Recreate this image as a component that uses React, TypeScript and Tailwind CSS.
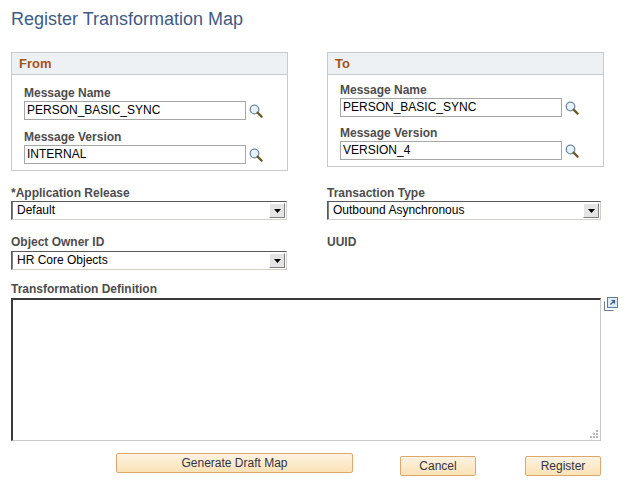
import React from 'react';

const Lookup: React.FC = () => (
  <svg width="14" height="14" viewBox="0 0 14 14" className="ml-[3px] shrink-0">
    <circle cx="5.5" cy="5.5" r="4.3" fill="#e4f1fb" stroke="#6f8aa5" strokeWidth="1.3" />
    <path d="M3.6 4.2 A2.4 2.4 0 0 1 5.8 2.9" fill="none" stroke="#ffffff" strokeWidth="1" />
    <path d="M8.6 8.6 L12.6 12.6" stroke="#6b5a2a" strokeWidth="2.2" strokeLinecap="round" />
  </svg>
);

const LookupField: React.FC<{ label: string; value: string; className?: string }> = ({ label, value, className }) => (
  <div className={className}>
    <div className="text-[12px] font-bold leading-[14px] text-[#4d4d4d]">{label}</div>
    <div className="flex items-center mt-[1px]">
      <div className="w-[222px] h-[19px] border border-[#a6a6a6] bg-white px-[2px] text-[12px] leading-[17px] text-black">
        {value}
      </div>
      <Lookup />
    </div>
  </div>
);

const Group: React.FC<{ title: string; children: React.ReactNode; tight?: boolean }> = ({ title, children, tight }) => (
  <div className={`w-[277px] border border-[#c8cbce] ${tight ? 'h-[115px]' : 'h-[119px]'}`}>
    <div className="h-[22px] bg-[#eef1f3] border-b border-[#c8cbce] px-[7px] text-[13px] font-bold leading-[21px] text-[#a4541b]">
      {title}
    </div>
    <div className="pl-[12px]">{children}</div>
  </div>
);

const Select: React.FC<{ value: string; width: string }> = ({ value, width }) => (
  <div className={`${width} h-[19px] flex border-t border-l border-t-[#5a5a5a] border-l-[#5a5a5a] border-b border-r border-b-[#d4d0c8] border-r-[#d4d0c8] bg-white`}>
    <div className="flex-1 pl-[4px] text-[12px] leading-[17px] text-black border-l border-[#808080]">{value}</div>
    <div className="w-[16px] h-[15px] mt-[1px] mr-[1px] bg-[#e4e4e4] border border-t-white border-l-white border-b-[#808080] border-r-[#808080] flex items-center justify-center">
      <svg width="7" height="4" viewBox="0 0 7 4">
        <path d="M0 0 H7 L3.5 4 Z" fill="#000" />
      </svg>
    </div>
  </div>
);

const Label: React.FC<{ children: React.ReactNode }> = ({ children }) => (
  <div className="text-[12px] font-bold leading-[14px] text-[#4d4d4d]">{children}</div>
);

const Button: React.FC<{ label: string; width: string }> = ({ label, width }) => (
  <button
    type="button"
    className={`${width} h-[20px] rounded-[2px] border border-[#e0a76d] bg-gradient-to-b from-[#fdf3e2] to-[#fbe2b6] text-[12px] leading-[18px] text-[#333344]`}
  >
    {label}
  </button>
);

export default function App() {
  return (
    <div className="w-[630px] h-[489px] bg-white font-['Liberation_Sans',Arial,sans-serif] px-[11px] pt-[9px]">
      <h1 className="text-[18px] leading-[21px] text-[#3e5b86]">Register Transformation Map</h1>

      <div className="flex mt-[22px]">
        <Group title="From">
          <LookupField label="Message Name" value="PERSON_BASIC_SYNC" className="pt-[11px]" />
          <LookupField label="Message Version" value="INTERNAL" className="pt-[10px]" />
        </Group>
        <div className="ml-[39px]">
          <Group title="To" tight>
            <LookupField label="Message Name" value="PERSON_BASIC_SYNC" className="pt-[8px]" />
            <LookupField label="Message Version" value="VERSION_4" className="pt-[9px]" />
          </Group>
        </div>
      </div>

      <div className="flex mt-[15px]">
        <div className="w-[316px]">
          <Label>*Application Release</Label>
          <div className="mt-[1px]">
            <Select value="Default" width="w-[276px]" />
          </div>
          <div className="mt-[15px]">
            <Label>Object Owner ID</Label>
          </div>
          <div className="mt-[2px]">
            <Select value="HR Core Objects" width="w-[276px]" />
          </div>
        </div>
        <div>
          <Label>Transaction Type</Label>
          <div className="mt-[1px]">
            <Select value="Outbound Asynchronous" width="w-[274px]" />
          </div>
          <div className="mt-[15px]">
            <Label>UUID</Label>
          </div>
        </div>
      </div>

      <div className="mt-[12px]">
        <Label>Transformation Definition</Label>
        <div className="flex mt-[2px]">
          <div className="relative w-[590px] h-[143px] border-t-2 border-l-2 border-t-[#3a3a3a] border-l-[#3a3a3a] border-b border-r border-b-[#c8c8c8] border-r-[#c8c8c8] bg-white">
            <svg width="10" height="10" viewBox="0 0 10 10" className="absolute right-[1px] bottom-[1px]">
              <rect x="7" y="1" width="2" height="2" fill="#b8b8b8" />
              <rect x="4" y="4" width="2" height="2" fill="#b8b8b8" />
              <rect x="7" y="4" width="2" height="2" fill="#b8b8b8" />
              <rect x="1" y="7" width="2" height="2" fill="#b8b8b8" />
              <rect x="4" y="7" width="2" height="2" fill="#b8b8b8" />
              <rect x="7" y="7" width="2" height="2" fill="#b8b8b8" />
            </svg>
          </div>
          <svg width="16" height="16" viewBox="0 0 16 16" className="ml-[2px] -mt-[2px]">
            <path d="M1.5 5.5 V14.5 H10.5" fill="none" stroke="#6c7f93" strokeWidth="1" />
            <rect x="4.5" y="1.5" width="10" height="10" fill="#dfeaf4" stroke="#5b7fa3" strokeWidth="1" />
            <path d="M7.5 8.5 L11.5 4.5 M8.5 4.5 H11.5 V7.5" fill="none" stroke="#3f5f82" strokeWidth="1.2" />
          </svg>
        </div>
      </div>

      <div className="flex mt-[12px] pl-[105px]">
        <Button label="Generate Draft Map" width="w-[237px]" />
        <div className="ml-[47px]">
          <Button label="Cancel" width="w-[76px]" />
        </div>
        <div className="ml-[49px]">
          <Button label="Register" width="w-[76px]" />
        </div>
      </div>
    </div>
  );
}
